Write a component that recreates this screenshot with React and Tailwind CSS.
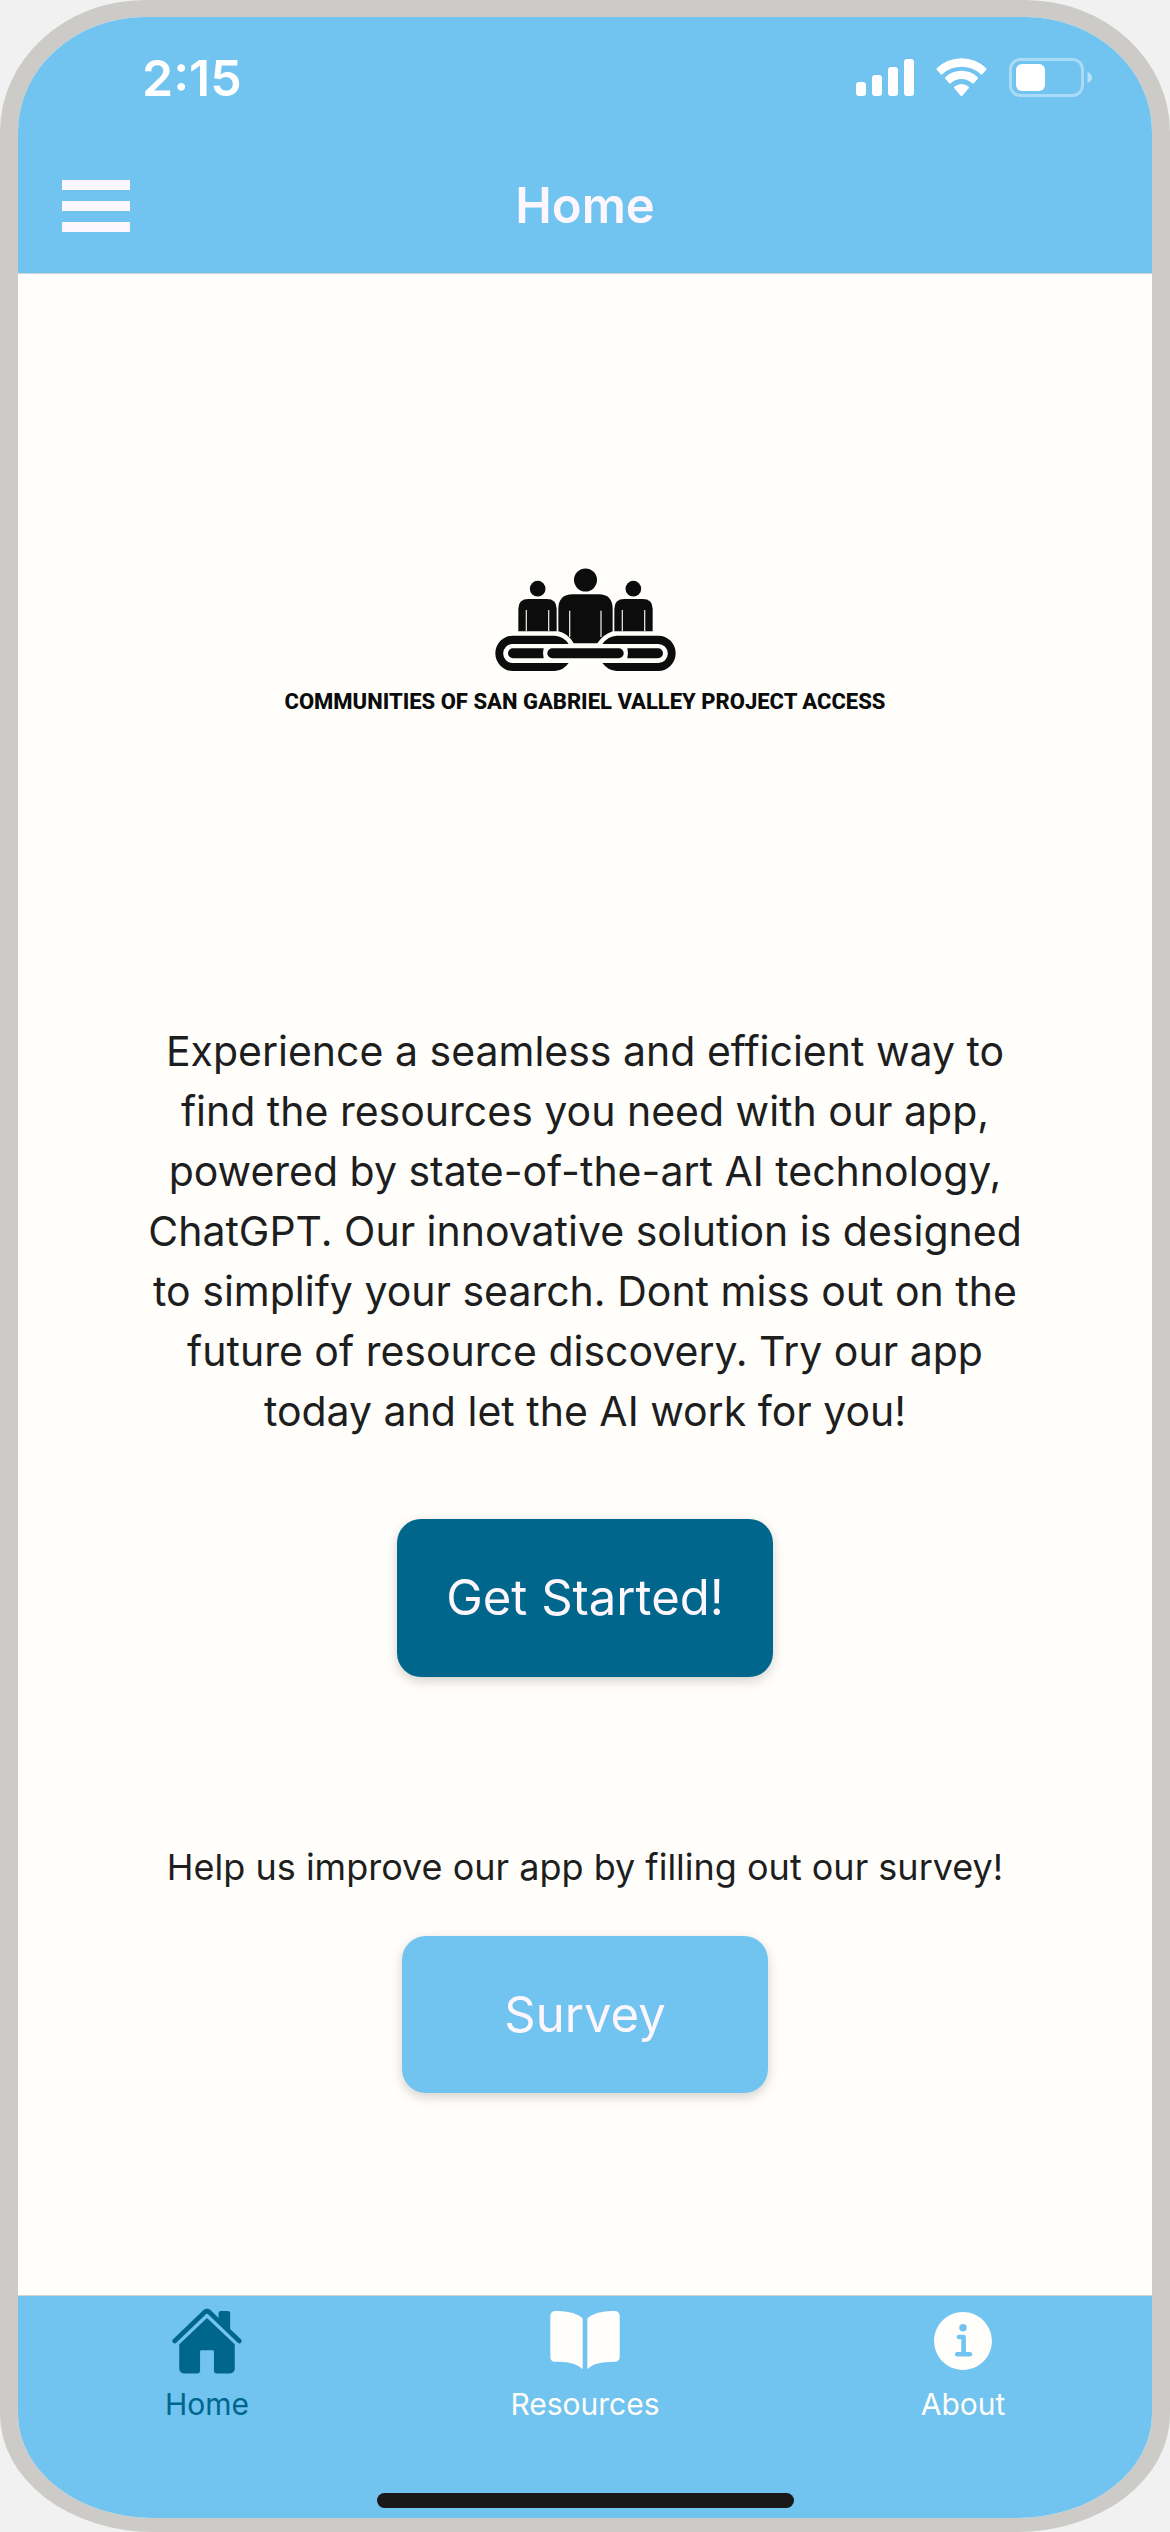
import { IoHome, IoBook, IoInformationCircle } from "react-icons/io5";

function StatusIcons() {
  return (
    <svg className="h-10 w-[236px]" viewBox="0 0 236 40" fill="#fff" aria-hidden="true">
      <rect x="0" y="24" width="10" height="14" rx="3" />
      <rect x="16" y="17" width="10" height="21" rx="3" />
      <rect x="32" y="9" width="10" height="29" rx="3" />
      <rect x="48" y="1" width="10" height="37" rx="3" />
      <path d="M81 12 Q80 11 81 10 A35.5 35.5 0 0 1 130 10 Q131 11 130 12 L126.500 16 Q125.500 17 124.500 16 A28.500 28.500 0 0 0 86.500 16 Q85.500 17 84.500 16 Z" />
      <path d="M89.500 21 Q88.600 20 89.500 19 A23.500 23.500 0 0 1 121.500 19 Q122.400 20 121.500 21 L118 25 Q117 26 116 25 A16 16 0 0 0 95 25 Q94 26 93 25 Z" />
      <path d="M98.500 30.500 Q97.500 29.500 98.500 28.600 A11 11 0 0 1 112.500 28.600 Q113.500 29.500 112.500 30.500 L106.500 37.500 Q105.500 38.500 104.500 37.500 Z" />
      <rect x="154.500" y="1.500" width="72" height="36" rx="10" fill="none" stroke="#fff" strokeOpacity="0.4" strokeWidth="3" />
      <rect x="160" y="6" width="29" height="27" rx="6" />
      <path d="M231.500 14 Q236 16 236 19.500 Q236 23 231.500 25 Z" fillOpacity="0.5" />
    </svg>
  );
}

function Logo() {
  return (
    <svg className="h-[104px] w-[181px]" viewBox="45 26 543 312" fill="#0c0c0c" aria-hidden="true">
      <circle cx="173" cy="88" r="23.500" />
      <circle cx="460" cy="88" r="23.500" />
      <circle cx="316.500" cy="62" r="34.500" />
      <path d="M115 216 V148 Q115 119 145 119 H200 Q230 119 230 148 V216 Z" />
      <path d="M403 216 V148 Q403 119 433 119 H488 Q518 119 518 148 V216 Z" />
      <path d="M235 216 V150 Q235 105 278 105 H356 Q398 105 398 150 V216 Q370 225 352 252 H281 Q264 222 235 216 Z" />
      <g stroke="#d8d8d6" strokeWidth="4" fill="none">
        <path d="M139 152 V216 M206 152 V216 M427 152 V216 M494 152 V216 M269 154 V233 M363 154 V233" />
      </g>
      <path d="M98 229 H224 Q250 230 266 254 H98 A28 28 0 0 0 98 311 H266 Q250 334 224 335 H98 A52 53 0 0 1 98 229 Z" />
      <path d="M535 229 H410 Q384 230 367 254 H535 A28 28 0 0 1 535 311 H367 Q384 334 410 335 H535 A52 53 0 0 0 535 229 Z" />
      <path d="M99 267 H191 Q187 282 191 297 H99 A15 15 0 0 1 99 267 Z" />
      <path d="M534 267 H442 Q446 282 442 297 H534 A15 15 0 0 0 534 267 Z" />
      <rect x="202" y="267" width="229" height="30" rx="15" />
    </svg>
  );
}

const tabs = [
  { label: "Home", Icon: IoHome, color: "text-[#00668b]" },
  { label: "Resources", Icon: IoBook, color: "text-[#fffefb]" },
  { label: "About", Icon: IoInformationCircle, color: "text-[#fffefb]" },
];

export default function App() {
  return (
    <div className="min-h-screen bg-[#f1f1f1] font-['Inter',sans-serif] text-[#1e1e1f]">
      <div className="flex min-h-screen flex-col overflow-hidden rounded-[145px_145px_153px_153px/132px_132px_118px_118px] border-x-[18px] border-t-[17px] border-b-[14px] border-[#cccbc7] bg-[#fffefb]">
        <header className="border-b border-[#cfd3d4] bg-[#71c3f0]">
          <div className="flex h-[122px] items-center justify-between pr-[60px] pl-[124px] text-white">
            <time className="text-[50px] leading-[60px] font-semibold">2:15</time>
            <StatusIcons />
          </div>
          <div className="grid h-[134px] grid-cols-[1fr_auto_1fr] items-center px-11">
            <button type="button" aria-label="Open menu" className="flex w-[68px] flex-col gap-[11px]">
              <span className="h-[10px] w-full bg-[#fdf7fd]" />
              <span className="h-[10px] w-full bg-[#fdf7fd]" />
              <span className="h-[10px] w-full bg-[#fdf7fd]" />
            </button>
            <h1 className="text-[49px] leading-[60px] font-semibold text-[#fdf7fd]">Home</h1>
          </div>
        </header>

        <main className="flex flex-1 flex-col items-center px-[120px] pt-[294px] text-center">
          <Logo />
          <p className="mt-[14px] font-['Roboto',sans-serif] text-[22px] leading-[32px] font-extrabold whitespace-nowrap text-[#0c0c0c]">
            COMMUNITIES OF SAN GABRIEL VALLEY PROJECT ACCESS
          </p>
          <p className="mt-[303px] text-[41px] leading-[60px]">
            Experience a seamless and efficient way to find the resources you need with our app, powered by
            state-of-the-art AI technology, ChatGPT. Our innovative solution is designed to simplify your search. Dont
            miss out on the future of resource discovery. Try our app today and let the AI work for you!
          </p>
          <button
            type="button"
            className="mt-[78px] h-[158px] w-[376px] rounded-3xl bg-[#00668b] text-[49px] leading-[60px] text-[#fdf7fd] shadow-[0_4px_12px_rgba(0,0,0,0.18)]"
          >
            Get Started!
          </button>
          <p className="mt-[166px] text-[36px] leading-[48px]">Help us improve our app by filling out our survey!</p>
          <button
            type="button"
            className="mt-[45px] h-[157px] w-[366px] rounded-3xl bg-[#71c3f0] text-[49px] leading-[60px] text-[#fdf7fd] shadow-[0_4px_12px_rgba(0,0,0,0.18)]"
          >
            Survey
          </button>
        </main>

        <footer className="border-t border-[#cfd3d4] bg-[#71c3f0]">
          <nav className="grid grid-cols-3 pt-2">
            {tabs.map(({ label, Icon, color }) => (
              <a key={label} href="#" className={`flex flex-col items-center ${color}`}>
                <Icon className="size-[74px]" aria-hidden="true" />
                <span className="mt-[6px] text-[30px] leading-[40px]">{label}</span>
              </a>
            ))}
          </nav>
          <div className="mx-auto mt-[69px] mb-[10px] h-[15px] w-[417px] rounded-full bg-[#191919]" />
        </footer>
      </div>
    </div>
  );
}
